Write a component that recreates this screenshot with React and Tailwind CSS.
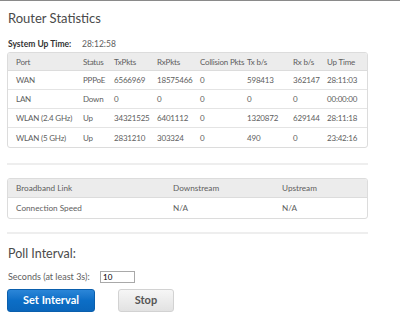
import React from "react";

const ports = [
  ["WAN", "PPPoE", "6566969", "18575466", "0", "598413", "362147", "28:11:03"],
  ["LAN", "Down", "0", "0", "0", "0", "0", "00:00:00"],
  ["WLAN (2.4 GHz)", "Up", "34321525", "6401112", "0", "1320872", "629144", "28:11:18"],
  ["WLAN (5 GHz)", "Up", "2831210", "303324", "0", "490", "0", "23:42:16"],
];

const heads = ["Port", "Status", "TxPkts", "RxPkts", "Collision Pkts", "Tx b/s", "Rx b/s", "Up Time"];
const widths = ["w-[67px]", "w-[31px]", "w-[43px]", "w-[43px]", "w-[47px]", "w-[46px]", "w-[34px]", "w-auto"];

export default function App() {
  return (
    <div className="w-[400px] h-[324px] bg-white border-t border-[#8a8a8a] overflow-hidden text-[#5e5e5e] font-['Lato',sans-serif]">
      <div className="pl-[7px] w-[368px]">
        <h1 className="text-[13px] text-[#4a4a4a] pt-[7px] leading-[20px] pl-px">Router Statistics</h1>

        <div className="flex items-center mt-[10px] text-[8.5px] leading-[12px] pl-px">
          <span className="font-bold text-[#333] w-[74px]">System Up Time:</span>
          <span>28:12:58</span>
        </div>

        {/* Port stats */}
        <div className="mt-[2px] border border-[#dcdcdc] rounded-[3px] overflow-hidden text-[8px] tracking-[-0.2px]">
          <div className="flex items-center h-[18px] bg-[#ececec] border-b border-[#dcdcdc] pl-[8px]">
            {heads.map((h, i) => (
              <div key={h} className={`${widths[i]} shrink-0 whitespace-nowrap`}>{h}</div>
            ))}
          </div>
          {ports.map((row, r) => (
            <div
              key={row[0]}
              className={`flex items-center h-[19px] pl-[8px] ${r < ports.length - 1 ? "border-b border-[#e4e4e4]" : ""}`}
            >
              {row.map((c, i) => (
                <div key={i} className={`${widths[i]} shrink-0 whitespace-nowrap`}>{c}</div>
              ))}
            </div>
          ))}
        </div>

        <div className="mt-[15px] h-[2px] bg-[#eeeeee]" />

        {/* Broadband link */}
        <div className="mt-[13px] border border-[#dcdcdc] rounded-[3px] overflow-hidden text-[8.2px]">
          <div className="flex items-center h-[19px] bg-[#ececec] border-b border-[#dcdcdc] pl-[8px]">
            <div className="w-[157px]">Broadband Link</div>
            <div className="w-[109px]">Downstream</div>
            <div>Upstream</div>
          </div>
          <div className="flex items-center h-[20px] pl-[8px]">
            <div className="w-[157px]">Connection Speed</div>
            <div className="w-[109px]">N/A</div>
            <div>N/A</div>
          </div>
        </div>

        <div className="mt-[13px] h-[2px] bg-[#eeeeee]" />

        <h2 className="text-[12.5px] text-[#4a4a4a] mt-[10px] leading-[20px] pl-px">Poll Interval:</h2>

        <div className="flex items-center mt-[7px] h-[12px] text-[9px] pl-px">
          <span className="w-[92px]">Seconds (at least 3s):</span>
          <input
            defaultValue="10"
            className="w-[35px] h-[12px] border border-[#a9a9a9] text-[8px] text-black px-[2px] outline-none"
          />
        </div>

        <div className="flex items-center mt-[6px]">
          <button className="w-[88px] h-[23px] rounded-[3px] bg-gradient-to-b from-[#2b86d8] via-[#0c6ec6] to-[#0a66bb] border border-[#0a5fad] text-white font-bold text-[11px]">
            Set Interval
          </button>
          <button className="ml-[23px] w-[56px] h-[23px] rounded-[3px] bg-gradient-to-b from-[#f6f6f6] to-[#e2e2e2] border border-[#d2d2d2] text-[#555] font-bold text-[11px]">
            Stop
          </button>
        </div>
      </div>
    </div>
  );
}
